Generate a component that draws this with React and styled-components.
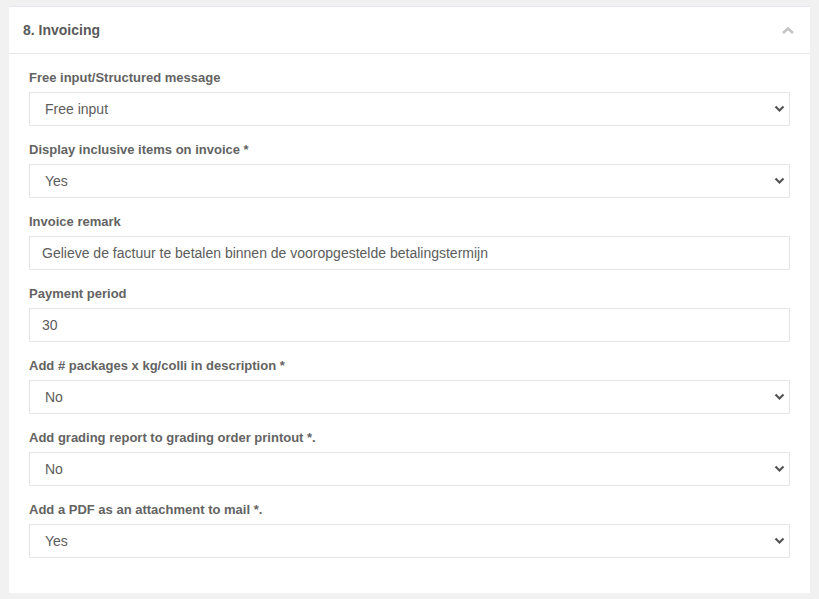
import React from "react";
import { styled, createGlobalStyle } from "styled-components";

const GlobalStyle = createGlobalStyle`
  body {
    margin: 0;
    background: #f1f1f1;
    font-family: "Liberation Sans", Arial, sans-serif;
  }
`;

const Page = styled.div`
  padding: 6px 9px 0 9px;
`;

const Card = styled.div`
  width: 801px;
  background: #ffffff;
  border-top: 1px solid #e3e7eb;
`;

const Header = styled.div`
  height: 46px;
  display: flex;
  align-items: center;
  justify-content: space-between;
  padding: 0 15px 0 14px;
  border-bottom: 1px solid #e8e8e8;
`;

const Title = styled.h3`
  margin: 0;
  font-size: 14px;
  font-weight: bold;
  color: #5a5a5a;
`;

const Body = styled.div`
  padding: 16px 20px 35px 20px;
  display: flex;
  flex-direction: column;
  gap: 16px;
`;

const Field = styled.div`
  display: flex;
  flex-direction: column;
  gap: 7px;
`;

const Label = styled.label`
  font-size: 13px;
  font-weight: bold;
  color: #636363;
  line-height: 15px;
`;

const Control = styled.div`
  position: relative;
  height: 34px;
`;

const inputBase = `
  box-sizing: border-box;
  width: 100%;
  height: 34px;
  border: 1px solid #e5e5e5;
  border-radius: 0;
  background: #fff;
  font-family: "Liberation Sans", Arial, sans-serif;
  font-size: 14px;
  color: #5c5c5c;
  outline: none;
`;

const Input = styled.input`
  ${inputBase}
  padding: 0 12px;
`;

const Select = styled.select`
  ${inputBase}
  padding: 0 15px;
  appearance: none;
`;

const Caret = styled.svg`
  position: absolute;
  right: 5px;
  top: 13px;
  pointer-events: none;
`;

const Chevron = () => (
  <Caret width="11" height="8" viewBox="0 0 11 8">
    <path d="M1.5 1.5 L5.5 5.5 L9.5 1.5" fill="none" stroke="#555" strokeWidth="2.2" />
  </Caret>
);

const fields = [
  { label: "Free input/Structured message", value: "Free input", select: true },
  { label: "Display inclusive items on invoice *", value: "Yes", select: true },
  { label: "Invoice remark", value: "Gelieve de factuur te betalen binnen de vooropgestelde betalingstermijn" },
  { label: "Payment period", value: "30" },
  { label: "Add # packages x kg/colli in description *", value: "No", select: true },
  { label: "Add grading report to grading order printout *.", value: "No", select: true },
  { label: "Add a PDF as an attachment to mail *.", value: "Yes", select: true },
];

export default function App() {
  return (
    <>
      <GlobalStyle />
      <Page>
        <Card>
          <Header>
            <Title>8. Invoicing</Title>
            <svg width="14" height="9" viewBox="0 0 14 9">
              <path d="M2 7 L7 2.5 L12 7" fill="none" stroke="#c4c4c4" strokeWidth="2.6" />
            </svg>
          </Header>
          <Body>
            {fields.map((f) => (
              <Field key={f.label}>
                <Label>{f.label}</Label>
                <Control>
                  {f.select ? (
                    <>
                      <Select defaultValue={f.value}>
                        <option>{f.value}</option>
                      </Select>
                      <Chevron />
                    </>
                  ) : (
                    <Input defaultValue={f.value} />
                  )}
                </Control>
              </Field>
            ))}
          </Body>
        </Card>
      </Page>
    </>
  );
}
